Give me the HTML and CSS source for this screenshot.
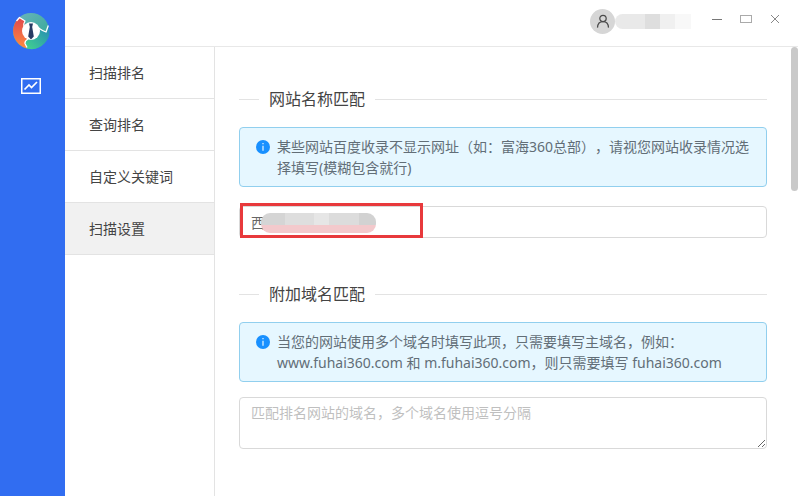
FILE: index.html
```
<!DOCTYPE html>
<html lang="zh-CN">
<head>
    <meta charset="UTF-8">
    <meta name="viewport" content="width=device-width, initial-scale=1.0">
    <title>扫描设置</title>
    <link rel="stylesheet" href="styles.css">
</head>
<body>

    <div class="app">
        <!-- Left icon bar -->
        <aside class="sidebar">
            <svg class="logo" viewBox="0 0 38 38" aria-hidden="true">
                <defs>
                    <linearGradient id="orange" x1="0" y1="0" x2="0" y2="1">
                        <stop offset="0" stop-color="#e0484e"/>
                        <stop offset="1" stop-color="#ff8c40"/>
                    </linearGradient>
                    <linearGradient id="teal" x1="0" y1="0" x2="1" y2="1">
                        <stop offset="0" stop-color="#6fb6bd"/>
                        <stop offset="1" stop-color="#2ba793"/>
                    </linearGradient>
                    <linearGradient id="green" x1="1" y1="0" x2="0" y2="1">
                        <stop offset="0" stop-color="#2486b8"/>
                        <stop offset="1" stop-color="#43d58d"/>
                    </linearGradient>
                </defs>
                <circle cx="19" cy="19" r="18" fill="url(#teal)"/>
                <path d="M4.500 8.500 L7.500 5.500 L13 9 L11 19 L16 27 L13 31 L15 36.500 A18 18 0 0 1 4.500 8.500Z" fill="url(#orange)"/>
                <path d="M36.500 13.500 A18 18 0 0 1 15 36.500 L13 31 L16 27 L27 17 L34 20Z" fill="url(#green)"/>
                <circle cx="19" cy="19" r="9" fill="#fff"/>
                <path d="M4.500 9 L7.500 5.500 L13 9 Q11 12 12 15 M26.500 16 Q30 18.500 34 20 L36.300 13.500 M16 27 Q12.500 29 13 31.500 L15 35.500" fill="none" stroke="#fff" stroke-width="1.300" stroke-linejoin="round"/>
                <path d="M17 11.500 h4 l-0.800 3.500 h-2.400Z M17.800 15 h2.400 l1.600 9.500 -2.800 3 -2.800 -3Z" fill="#283c64"/>
            </svg>
            <a class="sidebar-link" href="#" aria-label="排名">
                <svg viewBox="0 0 20 16" width="20" height="16">
                    <rect x="0.750" y="0.750" width="18.500" height="14.500" fill="none" stroke="#fff" stroke-width="1.500"/>
                    <path d="M3.500 11.500 L8 7 L10.500 9.500 L16 4" fill="none" stroke="#fff" stroke-width="1.700"/>
                </svg>
            </a>
        </aside>

        <div class="window">
            <header class="header">
                <div class="user">
                    <span class="avatar">
                        <svg viewBox="0 0 14 14" width="14" height="14" fill="none" stroke="#4a4a4a" stroke-width="1.200">
                            <circle cx="7" cy="4.500" r="3.200"/>
                            <path d="M1.500 13.600 C1.700 10 4 7.700 7 7.700 C10 7.700 12.300 10 12.500 13.600"/>
                        </svg>
                    </span>
                    <span class="user-name"></span>
                </div>
                <div class="window-buttons">
                    <button type="button" aria-label="最小化">
                        <svg viewBox="0 0 12 12" width="12" height="12"><path d="M1 6.500 H11" stroke="#777"/></svg>
                    </button>
                    <button type="button" aria-label="最大化">
                        <svg viewBox="0 0 12 12" width="12" height="12"><rect x="0.500" y="2.500" width="11" height="7" fill="none" stroke="#aaa"/></svg>
                    </button>
                    <button type="button" aria-label="关闭">
                        <svg viewBox="0 0 12 12" width="12" height="12"><path d="M2 2 L10 10 M10 2 L2 10" stroke="#888"/></svg>
                    </button>
                </div>
            </header>

            <div class="body">
                <nav class="menu">
                    <a href="#">扫描排名</a>
                    <a href="#">查询排名</a>
                    <a href="#">自定义关键词</a>
                    <a href="#" class="active">扫描设置</a>
                </nav>

                <main class="content">
                    <section class="group">
                        <h2 class="divider"><label for="siteName">网站名称匹配</label></h2>
                        <div class="alert">
                            <svg class="alert-icon" viewBox="0 0 14 14" width="14" height="14">
                                <circle cx="7" cy="7" r="7" fill="#1890ff"/>
                                <path d="M7 3 V4.300 M7 5.700 V10.800" stroke="#e6f7ff" stroke-width="1.200"/>
                            </svg>
                            <p>某些网站百度收录不显示网址（如：富海360总部），请视您网站收录情况选择填写(模糊包含就行)</p>
                        </div>
                        <div class="field">
                            <input type="text" id="siteName" value="西">
                            <span class="mask"></span>
                            <span class="highlight"></span>
                        </div>
                    </section>

                    <section class="group">
                        <h2 class="divider"><label for="domains">附加域名匹配</label></h2>
                        <div class="alert">
                            <svg class="alert-icon" viewBox="0 0 14 14" width="14" height="14">
                                <circle cx="7" cy="7" r="7" fill="#1890ff"/>
                                <path d="M7 3 V4.300 M7 5.700 V10.800" stroke="#e6f7ff" stroke-width="1.200"/>
                            </svg>
                            <p>当您的网站使用多个域名时填写此项，只需要填写主域名，例如：<br>www.fuhai360.com 和 m.fuhai360.com，则只需要填写 fuhai360.com</p>
                        </div>
                        <div class="field">
                            <textarea id="domains" placeholder="匹配排名网站的域名，多个域名使用逗号分隔"></textarea>
                        </div>
                    </section>
                </main>

                <div class="scrollbar"><div class="scrollbar-thumb"></div></div>
            </div>
        </div>
    </div>

</body>
</html>
```
FILE: styles.css
```
* {
    box-sizing: border-box;
}
body {
    margin: 0;
    font-family: "Noto Sans", "Noto Sans CJK SC", sans-serif;
    font-size: 14px;
    font-weight: 400;
    line-height: 21px;
    color: #444;
    background-color: #fff;
    text-spacing-trim: space-all;
}
.app {
    display: flex;
    min-height: 100vh;
}

/* Sidebar */
.sidebar {
    flex: none;
    width: 65px;
    padding-top: 12px;
    display: flex;
    flex-direction: column;
    align-items: center;
    gap: 28px;
    background-color: #316df1;
}
.logo {
    width: 38px;
    height: 38px;
    margin-right: 4px;
}
.sidebar-link {
    display: flex;
    margin-right: 3px;
}

/* Header */
.window {
    flex: 1;
    min-width: 0;
    display: flex;
    flex-direction: column;
}
.header {
    height: 47px;
    padding: 0 17px 4px 0;
    display: flex;
    justify-content: flex-end;
    align-items: center;
    gap: 20px;
    border-bottom: 1px solid #e8e8e8;
}
.user {
    display: flex;
    align-items: center;
}
.avatar {
    width: 25px;
    height: 25px;
    display: flex;
    align-items: center;
    justify-content: center;
    border-radius: 50%;
    background-color: #d6d6d6;
}
.user-name {
    width: 76px;
    height: 15px;
    border-radius: 8px 0 0 8px;
    background: linear-gradient(90deg, #e9e9e9 0 30px, #dedede 30px 45px, #f0f0f0 45px 60px, #f8f8f8 60px);
}
.window-buttons {
    display: flex;
    gap: 17px;
    padding-bottom: 4px;
}
.window-buttons button {
    display: flex;
    padding: 0;
    border: none;
    background: none;
    cursor: pointer;
}

/* Menu */
.body {
    flex: 1;
    display: flex;
}
.menu {
    flex: none;
    width: 150px;
    border-right: 1px solid #e3e3e3;
}
.menu a {
    display: block;
    height: 52px;
    padding-left: 24px;
    line-height: 51px;
    color: #444;
    text-decoration: none;
    border-bottom: 1px solid #e3e3e3;
}
.menu a.active {
    background-color: #f1f1f1;
}

/* Content */
.content {
    flex: 1;
    min-width: 0;
    padding: 40px 24px 0;
}
.group {
    margin-bottom: 40px;
}
.divider {
    display: flex;
    align-items: center;
    gap: 10px;
    margin: 0 0 16px;
    font-size: 16px;
    font-weight: 400;
    line-height: 24px;
}
.divider::before,
.divider::after {
    content: "";
    height: 1px;
    background-color: #e3e3e3;
}
.divider::before {
    width: 20px;
}
.divider::after {
    flex: 1;
}
.alert {
    display: flex;
    gap: 7px;
    margin-bottom: 15px;
    padding: 8px 16px;
    border: 1px solid #91cfee;
    border-radius: 4px;
    background-color: #e6f7ff;
    color: #626e77;
}
.alert-icon {
    flex: none;
    margin-top: 4px;
}
.alert p {
    margin: 0;
}
.field {
    position: relative;
    display: flex;
}
.field input,
.field textarea {
    width: 100%;
    padding: 4px 11px;
    font: inherit;
    color: #666;
    border: 1px solid #d9d9d9;
    border-radius: 4px;
    outline: none;
    background-color: #fff;
}
.field input {
    height: 32px;
    margin: 4px 0;
}
.field textarea {
    height: 52px;
    resize: vertical;
}
.field textarea::placeholder {
    color: #bfbfbf;
}
.mask {
    position: absolute;
    left: 22px;
    top: 11px;
    width: 115px;
    height: 20px;
    border-radius: 9px;
    background:
        linear-gradient(#f3c9cc, #f3c9cc) 0 100% / 100% 8px no-repeat,
        linear-gradient(90deg, #d5d5d5 0 24px, #dedede 24px 53px, #e6e6e6 53px 68px, #dcdcdc 68px 98px, #d2d2d2 98px);
}
.highlight {
    position: absolute;
    left: 1px;
    top: 1px;
    width: 183px;
    height: 35px;
    border: 3px solid #e8393c;
    pointer-events: none;
}

/* Scrollbar */
.scrollbar {
    flex: none;
    width: 7px;
}
.scrollbar-thumb {
    height: 144px;
    border-radius: 4px;
    background-color: #c9c9c9;
}
```
